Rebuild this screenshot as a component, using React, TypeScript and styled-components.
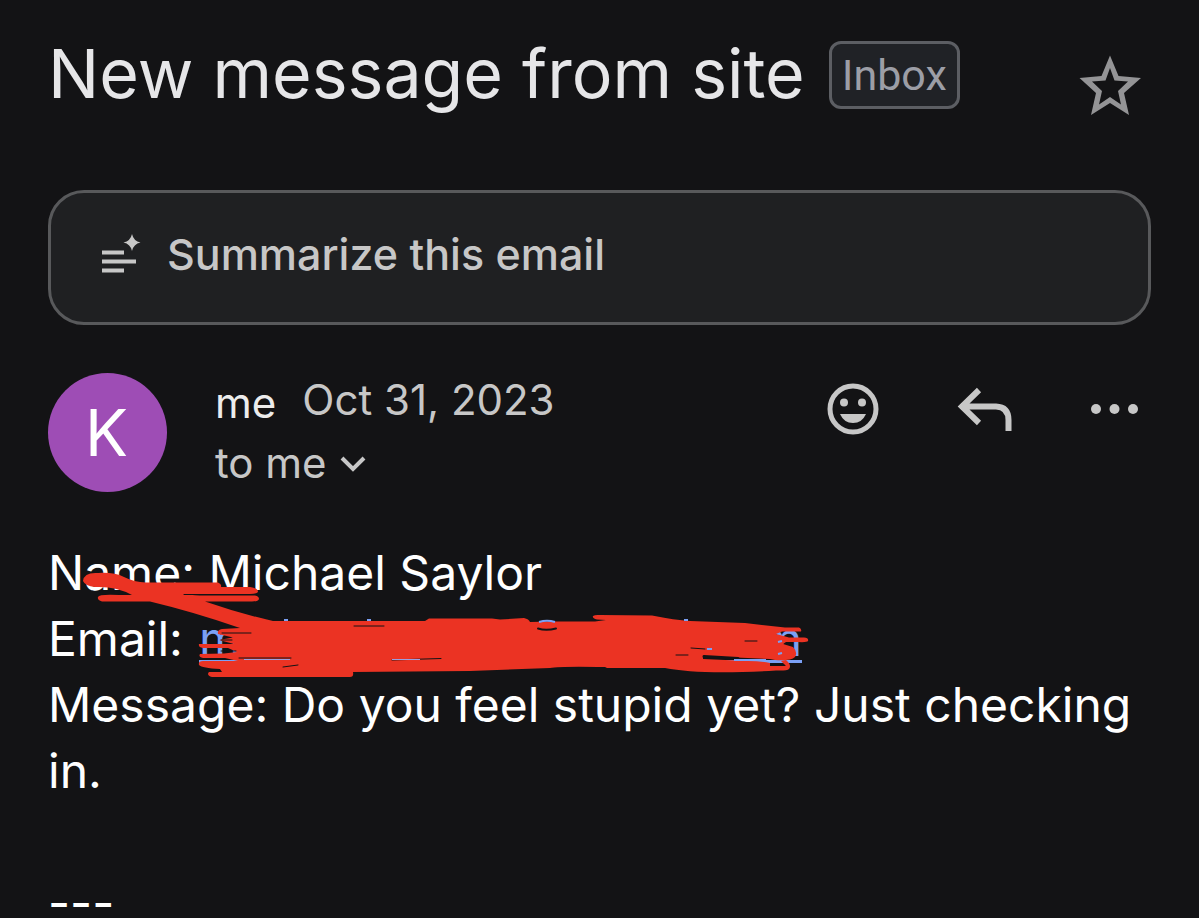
import React from "react";
import styled, { createGlobalStyle } from "styled-components";

const GlobalStyle = createGlobalStyle`
  * { box-sizing: border-box; }
  body {
    margin: 0;
    background: #131315;
    color: #fff;
    font-family: Inter, "Liberation Sans", sans-serif;
  }
  button {
    border: 0;
    padding: 0;
    background: none;
    color: inherit;
    font: inherit;
    cursor: pointer;
  }
  h1, p { margin: 0; }
  svg { display: block; }
`;

const Page = styled.main`
  padding: 32px 48px 0;
  min-height: 100vh;
`;

const Header = styled.header`
  display: flex;
  align-items: flex-start;
  justify-content: space-between;
`;

const Heading = styled.div`
  display: flex;
  align-items: center;
  gap: 24px;
`;

const Subject = styled.h1`
  padding-bottom: 4px;
  font-size: 68px;
  line-height: 82px;
  font-weight: 400;
  color: #e6e6e8;
  white-space: nowrap;
`;

const Label = styled.button`
  && {
    height: 68px;
    padding: 0 10px;
    border: 3px solid #5c5e63;
    border-radius: 12px;
    background: #202226;
    color: #9c9ea6;
    font-family: Roboto, sans-serif;
    font-size: 43px;
    line-height: 60px;
  }
`;

const StarButton = styled.button`
  margin: 18px 8px 0 0;
  color: #949496;
`;

const Summarize = styled.button`
  && {
    display: flex;
    align-items: center;
    gap: 26px;
    width: 100%;
    height: 135px;
    margin-top: 72px;
    padding: 0 48px 8px;
    border: 3px solid #58595b;
    border-radius: 36px;
    background: #1f2022;
    color: #c7c7c7;
    font-size: 43px;
    font-weight: 500;
  }
`;

const Sender = styled.section`
  display: flex;
  align-items: flex-start;
  margin-top: 48px;
`;

const Avatar = styled.div`
  display: flex;
  align-items: center;
  justify-content: center;
  width: 119px;
  height: 119px;
  padding-right: 2px;
  border-radius: 50%;
  background: #9e4db5;
  font-size: 64px;
  font-weight: 400;
`;

const Details = styled.div`
  flex: 1;
  margin-left: 48px;
  font-size: 42px;
  line-height: 60px;
  color: #c7c7c7;
`;

const SenderLine = styled.div`
  display: flex;
  align-items: flex-start;
  gap: 26px;
  height: 60px;
`;

const SentDate = styled.time`
  line-height: 54px;
`;

const SenderName = styled.span`
  color: #ececec;
`;

const Recipients = styled.button`
  && {
    display: flex;
    align-items: center;
    gap: 12px;
  }
`;

const Actions = styled.div`
  display: flex;
  align-items: center;
  height: 72px;
  padding-right: 12px;
  gap: 78px;
  color: #c7c7c7;
`;

const Body = styled.section`
  position: relative;
  margin-top: 47px;
  font-size: 48px;
  line-height: 66px;
`;

const Line = styled.p`
  min-height: 66px;
`;

const EmailLine = styled(Line)`
  display: flex;
  gap: 16px;
`;

const EmailLink = styled.a`
  display: flex;
  justify-content: space-between;
  width: 603px;
  height: 57px;
  border-bottom: 3px solid #7ba0f5;
  color: #7ba0f5;
  text-decoration: none;
`;

const Signature = styled.p`
  line-height: 46px;
  padding-top: 10px;
`;

const Scribble = styled.svg`
  position: absolute;
  left: 32px;
  top: 25px;
  pointer-events: none;
`;

function Redaction() {
  return (
    <Scribble width="732" height="116" viewBox="80 565 732 116" aria-hidden="true">
      <g fill="#eb3323">
        <path d="M83 581Q84 572 98 573Q114 572 124 577Q134 582 146 582.500H218Q222 584 221 587H250Q258 588 258 592Q257 594 250 594H184Q200 596 206 595.500H255Q259 596 259 599Q258 601.500 252 601.500H205Q238 613 273 621H425L429 618.500H492L500 619.500L524 618Q529 619 530 622L550 621.500H595L606 620L597 619.500Q592 618 593 616Q595 614.500 600 615L652 615.500Q675 620 690 621L745 623L785 627.500H799Q802 629 801 631.500H782L776 634L789 637.500H804Q809 638 808 641Q807 642.500 798 642L786 642L783 644L793 647Q798 652 795 657Q791 661 775 660L770 659L703 656V659L748 661Q762 661 770 663L770 666H786L781 661L786 660Q792 665 789 669Q787 671 776 670.500Q700 675 665 668H607L605 667Q560 666 550 668L470 671L353 672Q354 677 350 677H212Q206 675 209 672H222L220 669Q202 668 199 665Q198 661 203 661H238L225 658H203Q198 657 200 654L224 653.500L237 652L228 648H203Q198 647 199 644H234L219 640L233 637.500L218 634Q217 630 222 629L240 628Q194 612 150 601.500H102Q97 600 98 597Q99 594 119 595L132 595Q116 586 95 587Q85 586 83 581Z" />
      </g>
      <g fill="none" stroke="#131315" strokeLinecap="round" strokeWidth="1">
        <path d="M184 594.500L194 594.500M222 633H251M221 640H232M221 651H236M239 658H291M283 667L298 665M354 626H384M392 660L441 658.500M691 648L705 649M676 655H688M745 641H757M772 665H784" />
        <path d="M538 628.500Q546 631 556 628.500" strokeWidth="2" />
        <path d="M704 656.500L738 658.500" strokeWidth="3" />
      </g>
      <g fill="none" stroke="#9b9fe0" strokeWidth="1">
        <path d="M244 659.500H290M392 659.500H420" />
      </g>
      <g fill="none" stroke="#7ba0f5" strokeWidth="2">
        <path d="M539 622Q547 619.500 555 622M367 620H371M284 620H288M684 620H688M707 649H712M778 642L782 641M778 654L782 653M734 660H766" />
      </g>
    </Scribble>
  );
}

export default function App() {
  return (
    <>
      <GlobalStyle />
      <Page>
        <Header>
          <Heading>
            <Subject>New message from site</Subject>
            <Label type="button">Inbox</Label>
          </Heading>
          <StarButton type="button" aria-label="Star">
            <svg width="66" height="66" viewBox="0 0 66 66" fill="currentColor" fillRule="evenodd">
              <path d="M33 5.500L41.500 26L64 28L47 43L52 65L33 53L14 65L19 43L2.500 28L24.500 26ZM33 18L28.500 30.500L15 31.500L25 41L22 54.500L33 47L44 54.500L41 41L51 31.500L37.500 30.500Z" />
            </svg>
          </StarButton>
        </Header>

        <Summarize type="button">
          <svg width="42" height="42" viewBox="0 0 42 42" fill="currentColor" aria-hidden="true">
            <path d="M3 17.500H25V21.500H3ZM3 26.500H37V30.500H3ZM3 35.500H25V39.500H3ZM33 1Q34.500 8 41.500 9.500Q34.500 11 33 18Q31.500 11 24.500 9.500Q31.500 8 33 1Z" />
          </svg>
          Summarize this email
        </Summarize>

        <Sender>
          <Avatar>K</Avatar>
          <Details>
            <SenderLine>
              <SenderName>me</SenderName>
              <SentDate dateTime="2023-10-31">Oct 31, 2023</SentDate>
            </SenderLine>
            <Recipients type="button">
              to me
              <svg width="28" height="20" viewBox="0 0 28 20" fill="none" stroke="currentColor" strokeWidth="4" aria-hidden="true">
                <path d="M3 5L14 16L25 5" />
              </svg>
            </Recipients>
          </Details>
          <Actions>
            <button type="button" aria-label="Add reaction">
              <svg width="52" height="52" viewBox="0 0 52 52" fill="currentColor">
                <circle cx="26" cy="26" r="23" fill="none" stroke="currentColor" strokeWidth="5" />
                <circle cx="17" cy="19.500" r="4" />
                <circle cx="35" cy="19.500" r="4" />
                <path d="M13 31H39Q35 40 26 40Q17 40 13 31Z" />
              </svg>
            </button>
            <button type="button" aria-label="Reply">
              <svg width="56" height="46" viewBox="0 0 56 46" fill="none" stroke="currentColor" strokeWidth="6">
                <path d="M22 4L5 20.500L22 37M5 20.500H39Q51.500 21 51.500 34V45" />
              </svg>
            </button>
            <button type="button" aria-label="More options">
              <svg width="48" height="12" viewBox="0 0 48 12" fill="currentColor">
                <circle cx="5" cy="6" r="5" />
                <circle cx="23.500" cy="6" r="5" />
                <circle cx="42" cy="6" r="5" />
              </svg>
            </button>
          </Actions>
        </Sender>

        <Body>
          <Line>Name: Michael Saylor</Line>
          <EmailLine>
            Email:
            <EmailLink href="#email" aria-label="Email address">
              <span>m</span>
              <span>m</span>
            </EmailLink>
          </EmailLine>
          <Line>Message: Do you feel stupid yet? Just checking in.</Line>
          <Line />
          <Signature>---</Signature>
          <Redaction />
        </Body>
      </Page>
    </>
  );
}
